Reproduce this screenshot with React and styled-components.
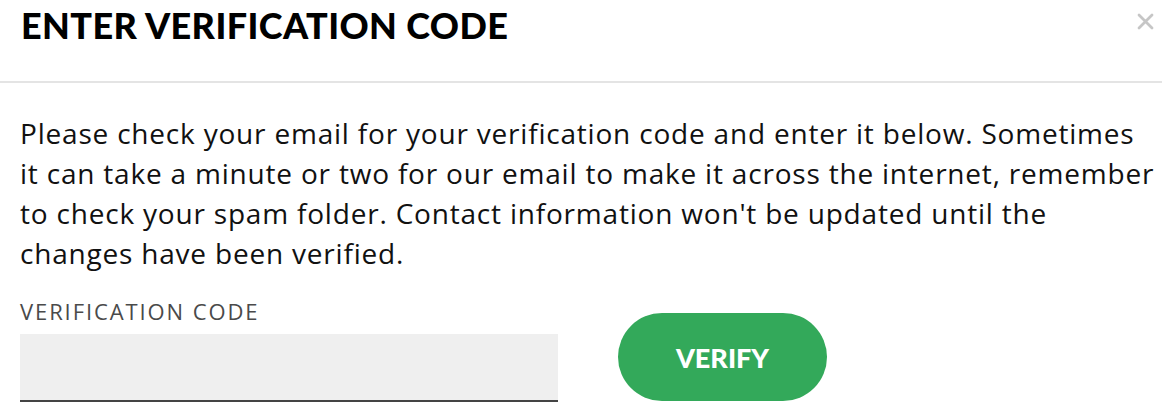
import styled, { createGlobalStyle } from "styled-components";

const GlobalStyle = createGlobalStyle`
  html, body {
    margin: 0;
    padding: 0;
    background: #fff;
  }
  body {
    font-family: "Open Sans", "Liberation Sans", sans-serif;
    color: #111;
  }
`

const StyledModal = styled.div`
  width: 1162px;
  height: 410px;
  background: #fff;
  overflow: hidden;
`

const StyledHeader = styled.div`
  display: flex;
  justify-content: space-between;
  align-items: flex-start;
  height: 81px;
  padding: 0 8px 0 21px;
  border-bottom: 2px solid #e4e4e4;
`

const StyledTitle = styled.h2`
  margin: 7px 0 0;
  font-family: "Lato", "Liberation Sans", sans-serif;
  font-size: 36px;
  font-weight: 900;
  line-height: 36px;
  letter-spacing: 0.4px;
  color: #000;
`

const StyledClose = styled.button`
  margin-top: 13px;
  padding: 0;
  border: 0;
  background: none;
  width: 17px;
  height: 17px;
  cursor: pointer;
`

const StyledBody = styled.div`
  padding: 30px 20px 0;
`

const StyledParagraph = styled.p`
  margin: 0;
  font-size: 28px;
  line-height: 40px;
  letter-spacing: 0.8px;
  white-space: nowrap;
  color: #111;
`

const StyledForm = styled.div`
  display: flex;
  align-items: flex-end;
  gap: 60px;
  margin-top: 25px;
`

const StyledField = styled.div`
  display: flex;
  flex-direction: column;
`

const StyledLabel = styled.label`
  font-size: 22px;
  line-height: 26px;
  letter-spacing: 1.9px;
  color: #4a4a4a;
  margin-bottom: 10px;
`

const StyledInput = styled.input`
  width: 538px;
  height: 68px;
  box-sizing: border-box;
  border: 0;
  border-bottom: 2px solid #444;
  background: #efefef;
  font-size: 22px;
  padding: 0 14px;
  outline: none;
`

const StyledButton = styled.button`
  width: 209px;
  height: 88px;
  margin-bottom: 1px;
  border: 0;
  border-radius: 44px;
  background: #33a95a;
  color: #fff;
  font-family: "Lato", "Liberation Sans", sans-serif;
  font-size: 27px;
  font-weight: 900;
  cursor: pointer;
`

export default function App() {
    return (
        <>
            <GlobalStyle />
            <StyledModal>
                <StyledHeader>
                    <StyledTitle>ENTER VERIFICATION CODE</StyledTitle>
                    <StyledClose aria-label="Close">
                        <svg width="17" height="17" viewBox="0 0 17 17">
                            <path d="M2 2 L15 15 M15 2 L2 15" stroke="#c6c6c6" strokeWidth="2.8" strokeLinecap="round" />
                        </svg>
                    </StyledClose>
                </StyledHeader>

                <StyledBody>
                    <StyledParagraph>
                        Please check your email for your verification code and enter it below. Sometimes<br />
                        it can take a minute or two for our email to make it across the internet, remember<br />
                        to check your spam folder. Contact information won't be updated until the<br />
                        changes have been verified.
                    </StyledParagraph>

                    <StyledForm>
                        <StyledField>
                            <StyledLabel htmlFor="code">VERIFICATION CODE</StyledLabel>
                            <StyledInput id="code" type="text" />
                        </StyledField>
                        <StyledButton>VERIFY</StyledButton>
                    </StyledForm>
                </StyledBody>
            </StyledModal>
        </>
    )
}
